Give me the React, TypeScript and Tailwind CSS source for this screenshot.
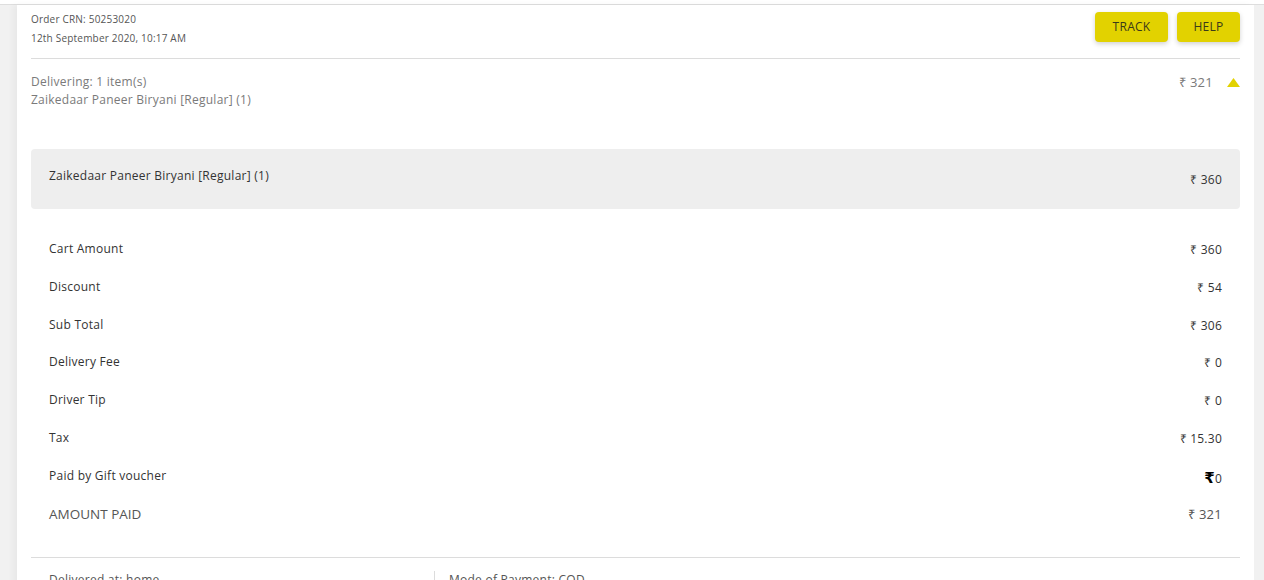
import React from 'react';

const rows: { label: string; value: string }[] = [
  { label: 'Cart Amount', value: '₹ 360' },
  { label: 'Discount', value: '₹ 54' },
  { label: 'Sub Total', value: '₹ 306' },
  { label: 'Delivery Fee', value: '₹ 0' },
  { label: 'Driver Tip', value: '₹ 0' },
  { label: 'Tax', value: '₹ 15.30' },
];

export default function App() {
  return (
    <div className="h-[580px] overflow-hidden bg-[#f1f1f1] font-['Open_Sans',sans-serif] tracking-[0.25px] text-[#444]">
      {/* top strip */}
      <div className="h-[5px] bg-white border-b border-[#dedede]" />

      <div className="ml-[17px] mr-[10px] bg-white px-[14px] shadow-[-4px_0_6px_rgba(0,0,0,0.04)]">
        {/* ── order header ── */}
        <div className="flex items-start justify-between pt-[5px] pb-[10px] border-b border-[#dcdcdc]">
          <div className="text-[10px] text-[#555] leading-[19px] tracking-[0.2px]">
            <div>Order CRN: 50253020</div>
            <div>12th September 2020, 10:17 AM</div>
          </div>
          <div className="flex gap-[9px] pt-[2px]">
            <button className="h-[30px] w-[73px] rounded-[4px] bg-[#e2d200] text-[12px] text-[#3a3a1a] shadow-[0_2px_5px_rgba(0,0,0,0.18)]">
              TRACK
            </button>
            <button className="h-[30px] w-[63px] rounded-[4px] bg-[#e2d200] text-[12px] text-[#3a3a1a] shadow-[0_2px_5px_rgba(0,0,0,0.18)]">
              HELP
            </button>
          </div>
        </div>

        {/* ── delivering summary ── */}
        <div className="flex justify-between pt-[14px] text-[12px] text-[#7a7a7a] leading-[18px]">
          <div>
            <div>Delivering: 1 item(s)</div>
            <div>Zaikedaar Paneer Biryani [Regular] (1)</div>
          </div>
          <div className="flex items-start gap-[14px]">
            <span className="text-[13px]">₹ 321</span>
            <svg width="13" height="9" viewBox="0 0 13 9" className="mt-[5px]">
              <polygon points="6.5,0 13,9 0,9" fill="#e2d200" />
            </svg>
          </div>
        </div>

        {/* ── item box ── */}
        <div className="mt-[40px] flex h-[60px] items-start justify-between rounded-[4px] bg-[#eeeeee] px-[18px] pt-[18px] text-[12px] text-[#333]">
          <span>Zaikedaar Paneer Biryani [Regular] (1)</span>
          <span className="pt-[4px]">₹ 360</span>
        </div>

        {/* ── bill rows ── */}
        <div className="px-[18px] pt-[31px] text-[12px] text-[#333]">
          {rows.map((r) => (
            <div key={r.label} className="flex h-[37.8px] items-start justify-between">
              <span>{r.label}</span>
              <span className="pt-[1px]">{r.value}</span>
            </div>
          ))}
          <div className="flex h-[37px] items-start justify-between">
            <span>Paid by Gift voucher</span>
            <span className="flex items-baseline">
              <span className="font-['DejaVu_Sans',sans-serif] text-[15px] font-bold text-black">₹</span>
              <span className="text-[12px]">0</span>
            </span>
          </div>
          <div className="flex h-[53px] items-start justify-between text-[#555]">
            <span className="text-[13.5px] tracking-normal">AMOUNT PAID</span>
            <span className="pt-[1px] text-[13px]">₹ 321</span>
          </div>
        </div>

        {/* ── footer ── */}
        <div className="border-t border-[#dcdcdc] flex pt-[13px] text-[12px] text-[#555]">
          <div className="w-[403px] pl-[18px]">Delivered at: home</div>
          <div className="border-l border-[#dcdcdc] pl-[14px] h-[30px]">Mode of Payment: COD</div>
        </div>
      </div>
    </div>
  );
}
